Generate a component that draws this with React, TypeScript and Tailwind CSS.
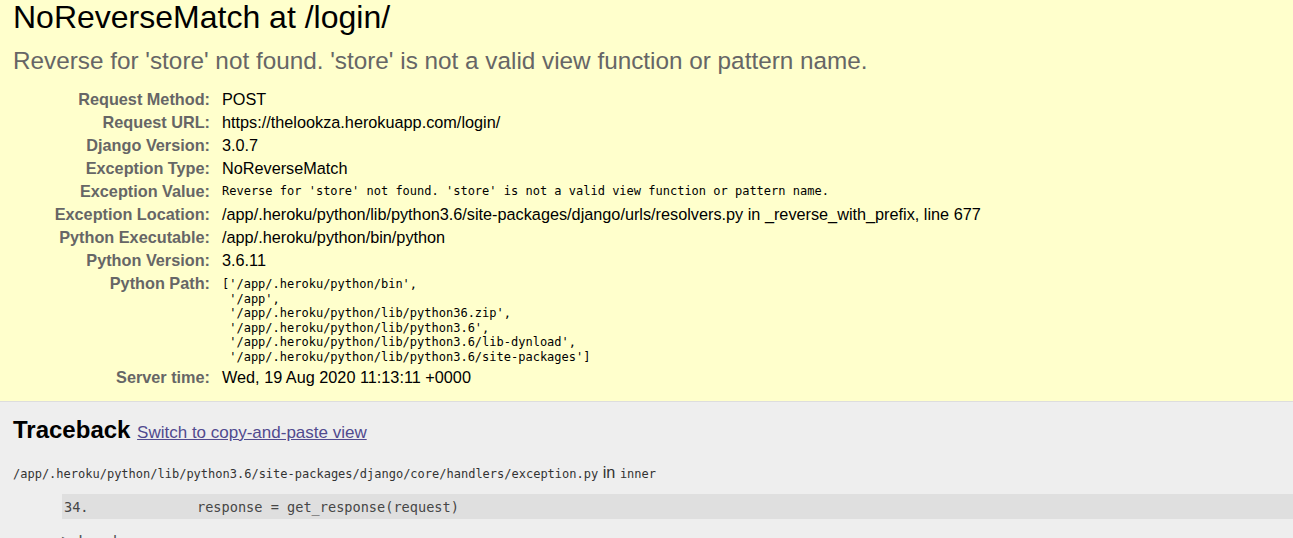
const META: [string, string][] = [
  ["Request Method:", "POST"],
  ["Request URL:", "https://thelookza.herokuapp.com/login/"],
  ["Django Version:", "3.0.7"],
  ["Exception Type:", "NoReverseMatch"],
];

const META2: [string, string][] = [
  [
    "Exception Location:",
    "/app/.heroku/python/lib/python3.6/site-packages/django/urls/resolvers.py in _reverse_with_prefix, line 677",
  ],
  ["Python Executable:", "/app/.heroku/python/bin/python"],
  ["Python Version:", "3.6.11"],
];

const PYTHON_PATH = `['/app/.heroku/python/bin',
 '/app',
 '/app/.heroku/python/lib/python36.zip',
 '/app/.heroku/python/lib/python3.6',
 '/app/.heroku/python/lib/python3.6/lib-dynload',
 '/app/.heroku/python/lib/python3.6/site-packages']`;

const monoFace = "font-['DejaVu_Sans_Mono','Liberation_Mono',monospace]";
const mono = `${monoFace} text-[12px]`;

function Label({ children }: { children: string }) {
  return (
    <div className="py-[2px] text-right text-[16.25px] font-bold leading-[19px] text-[#666]">
      {children}
    </div>
  );
}

function Value({ children }: { children: string }) {
  return (
    <div className="py-[2px] pl-[12px] text-[16.25px] leading-[19px] text-black">{children}</div>
  );
}

export default function App() {
  return (
    <div className="min-h-[538px] overflow-hidden bg-[#eee] font-['Liberation_Sans',Arial,sans-serif] text-black">
      <div className="border-b border-[#ddd] bg-[#ffc] px-[13px] pb-[12px] pt-[2px]">
        <h1 className="text-[32px] font-normal leading-[30px]">NoReverseMatch at /login/</h1>
        <h2 className="mt-[15px] text-[24.3px] font-normal leading-[28px] text-[#666]">
          Reverse for 'store' not found. 'store' is not a valid view function or pattern name.
        </h2>

        <div className="mt-[13px] grid grid-cols-[197px_1fr]">
          {META.map(([k, v]) => (
            <div key={k} className="contents">
              <Label>{k}</Label>
              <Value>{v}</Value>
            </div>
          ))}

          <Label>Exception Value:</Label>
          <div className={`py-[2px] pl-[12px] leading-[19px] ${mono}`}>
            Reverse for 'store' not found. 'store' is not a valid view function or pattern name.
          </div>

          {META2.map(([k, v]) => (
            <div key={k} className="contents">
              <Label>{k}</Label>
              <Value>{v}</Value>
            </div>
          ))}

          <Label>Python Path:</Label>
          <pre className={`whitespace-pre pb-[1.4px] pl-[12px] pt-[5px] leading-[14.6px] ${mono}`}>
            {PYTHON_PATH}
          </pre>

          <Label>Server time:</Label>
          <Value>Wed, 19 Aug 2020 11:13:11 +0000</Value>
        </div>
      </div>

      <div className="pl-[13px] pt-[14px]">
        <h2 className="text-[24px] font-bold leading-[28px]">
          Traceback{" "}
          <a href="#" className="text-[17px] font-normal leading-none text-[#514a8f] underline">
            Switch to copy-and-paste view
          </a>
        </h2>

        <div className="mt-[19px] h-[19px] text-[16.25px] leading-[19px] text-[#333]">
          <code className={`${mono} leading-none`}>
            /app/.heroku/python/lib/python3.6/site-packages/django/core/handlers/exception.py
          </code>{" "}
          in <code className={`${mono} leading-none`}>inner</code>
        </div>

        <div
          className={`ml-[49px] mt-[12px] flex h-[25px] items-center bg-[#dfdfdf] pl-[2px] pt-[1px] text-[13.6px] leading-[24px] text-[#464646] ${monoFace}`}
        >
          <span className="w-[133px] shrink-0">34.</span>
          <span className="whitespace-pre">response = get_response(request)</span>
        </div>

        <div className="ml-[49px] mt-[13px] text-[16px] leading-[19px] text-[#555]">▶ Local vars</div>
      </div>
    </div>
  );
}
